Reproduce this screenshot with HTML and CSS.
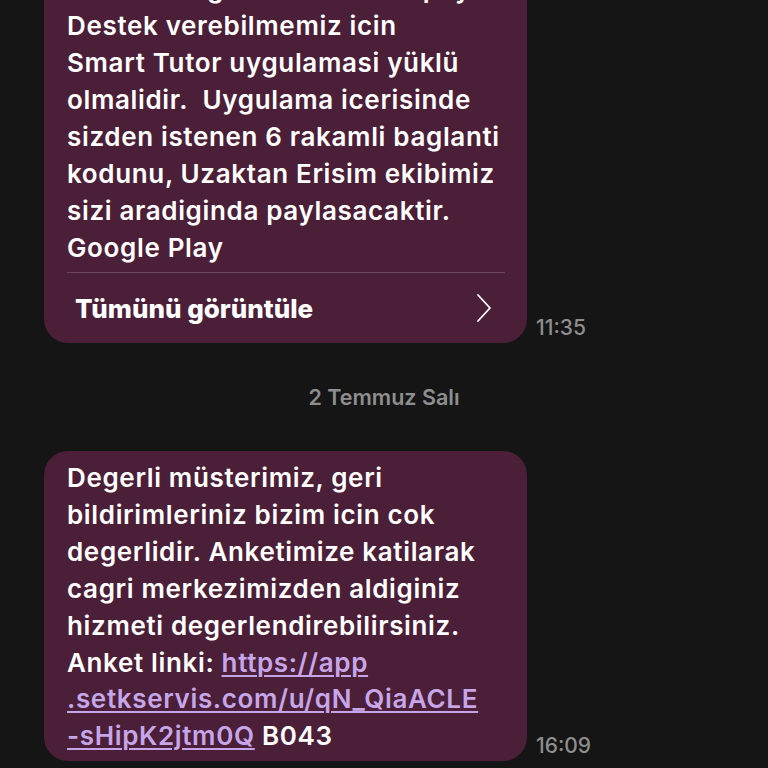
FILE: index.html
```html
<!DOCTYPE html>
<html lang="tr">
<head>
    <meta charset="UTF-8">
    <meta name="viewport" content="width=device-width, initial-scale=1.0">
    <title>Mesajlar</title>
    <link rel="stylesheet" href="styles.css">
</head>
<body>
    <div class="thread">
        <div class="row first">
            <div class="bubble">
                <div class="text">
                    cihaziniza guvenli erisimle paylasim<br>
                    Destek verebilmemiz icin<br>
                    Smart Tutor uygulamasi yüklü<br>
                    olmalidir.&nbsp; Uygulama icerisinde<br>
                    sizden istenen 6 rakamli baglanti<br>
                    kodunu, Uzaktan Erisim ekibimiz<br>
                    sizi aradiginda paylasacaktir.<br>
                    Google Play
                </div>
                <div class="more">
                    <span>Tümünü görüntüle</span>
                    <svg class="chevron" width="18" height="30" viewBox="0 0 18 30">
                        <path d="M3 2 L15 15 L3 28" fill="none" stroke="#fff" stroke-width="1.8" stroke-linecap="round" stroke-linejoin="round"/>
                    </svg>
                </div>
            </div>
            <span class="time">11:35</span>
        </div>

        <div class="date">2 Temmuz Salı</div>

        <div class="row">
            <div class="bubble">
                <div class="text second">
                    Degerli müsterimiz, geri<br>
                    bildirimleriniz bizim icin cok<br>
                    degerlidir. Anketimize katilarak<br>
                    cagri merkezimizden aldiginiz<br>
                    hizmeti degerlendirebilirsiniz.<br>
                    Anket linki: <a href="#">https://app<br>.setkservis.com/u/qN_QiaACLE<br>-sHipK2jtm0Q</a> B043
                </div>
            </div>
            <span class="time">16:09</span>
        </div>
    </div>
</body>
</html>
```

FILE: styles.css
```css
body {
    margin: 0;
    background-color: #151515;
    font-family: Inter, "Noto Sans", sans-serif;
    color: #fff;
    overflow: hidden;
    height: 768px;
}
.thread {
    padding-left: 44px;
}
.row {
    display: flex;
    align-items: flex-end;
    gap: 9px;
}
.row.first {
    margin-top: -40px;
}
.bubble {
    width: 483px;
    flex-shrink: 0;
    background-color: #4b1f38;
    border-radius: 24px;
}
.text {
    padding: 10px 23px 6px;
    font-size: 26px;
    font-weight: 600;
    line-height: 37px;
    white-space: nowrap;
    letter-spacing: 0.65px;
}
.text.second {
    padding: 9px 23px 6px;
    line-height: 36.9px;
}
.text a {
    color: #c6a6e8;
    text-decoration: underline;
    text-decoration-thickness: 2px;
    text-underline-offset: 3px;
}
.more {
    margin: 0 22px 0 23px;
    border-top: 1px solid #6d4760;
    height: 70px;
    display: flex;
    align-items: center;
    justify-content: space-between;
    padding: 0 12px 0 8px;
    font-size: 26px;
    font-weight: 800;
}
.chevron {
    display: block;
}
.time {
    font-size: 21px;
    font-weight: 500;
    color: #8e8e8e;
    margin-bottom: 3px;
}
.date {
    margin-left: -44px;
    text-align: center;
    font-size: 21.5px;
    font-weight: 600;
    color: #8e8e8e;
    padding: 41px 0 41px;
}
```
